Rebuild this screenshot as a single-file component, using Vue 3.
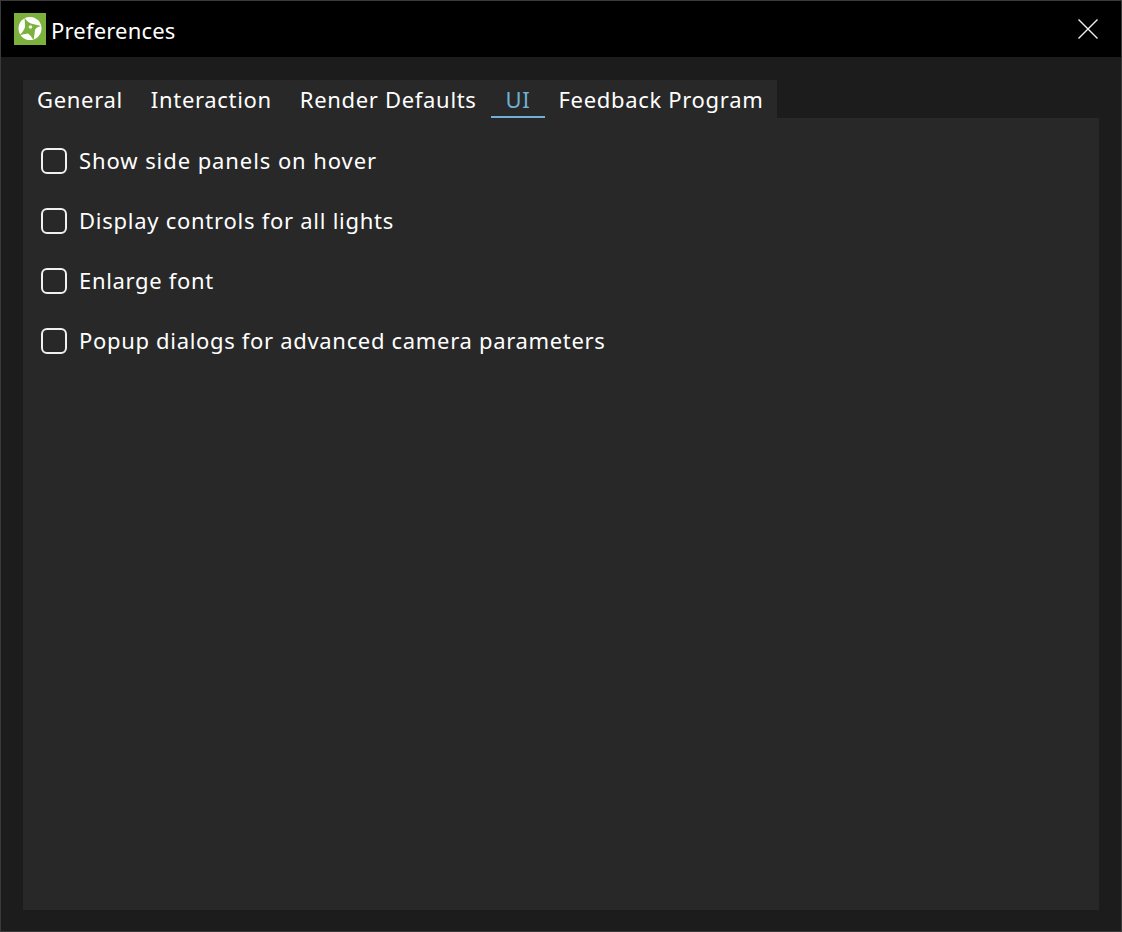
<script setup>
const tabs = [
  { label: 'General', active: false },
  { label: 'Interaction', active: false },
  { label: 'Render Defaults', active: false },
  { label: 'UI', active: true },
  { label: 'Feedback Program', active: false },
]
const options = [
  'Show side panels on hover',
  'Display controls for all lights',
  'Enlarge font',
  'Popup dialogs for advanced camera parameters',
]
</script>

<template>
  <div class="window">
    <header class="titlebar">
      <svg class="logo" viewBox="0 0 32 32" width="32" height="32">
        <rect width="32" height="32" fill="#7cb13e" />
        <circle cx="16" cy="15.5" r="11.5" fill="#fff" />
        <path d="M10.5 4.5 Q13 9 17 10.5 Q22 11.5 27 13 Q22 14 21 17 Q20.5 22 19.5 27 Q17 22.5 14 20.5 Q10 21 5 22.5 Q9.5 19 11 14 Q11 9 10.5 4.5 Z" fill="#7cb13e" />
        <circle cx="16.5" cy="14" r="1.8" fill="#fff" opacity="0.85" />
      </svg>
      <span class="title">Preferences</span>
      <svg class="close" viewBox="0 0 20 20" width="20" height="20">
        <path d="M0.5 0.5 L19.5 19.5 M19.5 0.5 L0.5 19.5" stroke="#f0f0f0" stroke-width="1.4" fill="none" />
      </svg>
    </header>
    <main class="body">
      <nav class="tabs">
        <div v-for="t in tabs" :key="t.label" class="tab" :class="{ active: t.active }">{{ t.label }}</div>
      </nav>
      <section class="panel">
        <label v-for="o in options" :key="o" class="option">
          <span class="box"></span>
          <span class="text">{{ o }}</span>
        </label>
      </section>
    </main>
  </div>
</template>

<style>
html, body { margin: 0; background: #1c1c1c; }
</style>

<style scoped>
.window {
  width: 1122px;
  height: 932px;
  box-sizing: border-box;
  border: 1px solid #3a3a3a;
  background: #1c1c1c;
  display: flex;
  flex-direction: column;
  font-family: "Noto Sans", "Open Sans", sans-serif;
  color: #fff;
}
.titlebar {
  height: 56px;
  flex: none;
  background: #000;
  display: flex;
  align-items: center;
  padding: 0 23px 0 13px;
}
.title {
  margin-left: 5px;
  padding-top: 2px;
  font-size: 22px;
  letter-spacing: 0.18px;
  flex: 1;
}
.body {
  flex: 1;
  display: flex;
  flex-direction: column;
  padding: 23px 22px 21px 22px;
  min-height: 0;
}
.tabs {
  display: flex;
  align-self: flex-start;
  height: 38px;
  background: #282828;
  flex: none;
}
.tab {
  box-sizing: border-box;
  height: 38px;
  padding: 0 14px;
  font-size: 22px;
  letter-spacing: 0.68px;
  line-height: 38px;
  white-space: nowrap;
}
.tab.active {
  color: #6fb0d6;
  padding: 0 14px 0 15px;
  border-bottom: 2px solid #6fb0d6;
}
.panel {
  flex: 1;
  background: #282828;
  display: flex;
  flex-direction: column;
  gap: 30px;
  padding: 28px 0 0 18px;
}
.option {
  display: flex;
  align-items: center;
  gap: 12px;
  height: 30px;
  font-size: 22px;
  letter-spacing: 0.68px;
}
.option:nth-child(1) { letter-spacing: 0.92px; }
.option:nth-child(2) { letter-spacing: 0.74px; }
.text {
  line-height: 28px;
  margin-bottom: 2px;
}
.box {
  width: 26px;
  height: 26px;
  box-sizing: border-box;
  border: 2px solid #f0f0f0;
  border-radius: 6px;
}
</style>
